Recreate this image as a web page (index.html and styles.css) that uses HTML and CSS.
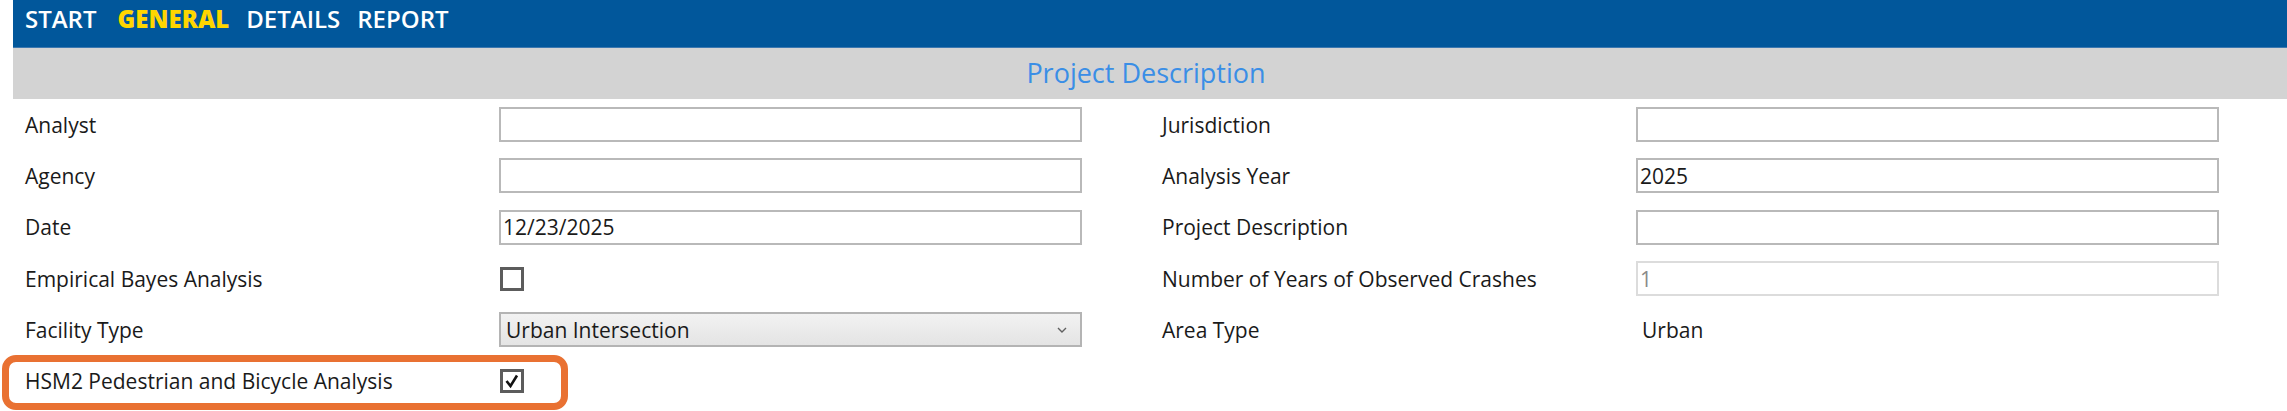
FILE: index.html
```html
<!DOCTYPE html>
<html>
<head>
<meta charset="utf-8">
<link rel="stylesheet" href="styles.css">
</head>
<body>
<div class="app">
  <nav class="tabs">
    <span class="tab first">START</span>
    <span class="tab active">GENERAL</span>
    <span class="tab">DETAILS</span>
    <span class="tab">REPORT</span>
  </nav>
  <div class="section-title">Project Description</div>
  <div class="form">
    <div class="col">
      <div class="row"><span class="label">Analyst</span><span class="textbox"></span></div>
      <div class="row"><span class="label">Agency</span><span class="textbox"></span></div>
      <div class="row"><span class="label">Date</span><span class="textbox">12/23/2025</span></div>
      <div class="row"><span class="label">Empirical Bayes Analysis</span><span class="checkbox"></span></div>
      <div class="row"><span class="label">Facility Type</span><span class="combo"><span class="combo-text">Urban Intersection</span><svg class="chev" width="10" height="6" viewBox="0 0 10 6"><path d="M1 1 L5 5 L9 1" fill="none" stroke="#606060" stroke-width="1.4"/></svg></span></div>
      <div class="row"><span class="label">HSM2 Pedestrian and Bicycle Analysis</span><span class="checkbox checked"><svg width="18" height="18" viewBox="0 0 18 18"><path d="M3.5 9 L7.5 14 L14 3.5" fill="none" stroke="#111" stroke-width="2.6"/></svg></span></div>
    </div>
    <div class="col">
      <div class="row"><span class="label">Jurisdiction</span><span class="textbox"></span></div>
      <div class="row"><span class="label">Analysis Year</span><span class="textbox">2025</span></div>
      <div class="row"><span class="label">Project Description</span><span class="textbox"></span></div>
      <div class="row"><span class="label">Number of Years of Observed Crashes</span><span class="textbox disabled">1</span></div>
      <div class="row"><span class="label">Area Type</span><span class="value">Urban</span></div>
    </div>
  </div>
  <div class="highlight"></div>
</div>
</body>
</html>
```
FILE: styles.css
```css
* { box-sizing: border-box; }
body {
  margin: 0;
  background: #fff;
  font-family: "Open Sans", "Noto Sans", sans-serif;
  color: #1a1a1a;
}
.app {
  position: relative;
  padding-left: 13px;
  height: 411px;
  overflow: hidden;
}
.tabs {
  height: 48px;
  background: #01579b;
  border-bottom: 1px solid #3c78b0;
  display: flex;
  align-items: flex-start;
  padding: 2px 0 0 12px;
  gap: 17px;
}
.tab {
  color: #fff;
  font-size: 24px;
  font-weight: 600;
}
.tab.first {
  margin-right: 4px;
}
.tab.active {
  color: #ffd600;
  font-weight: 800;
}
.section-title {
  height: 51px;
  background: #d3d3d3;
  color: #3a8ee6;
  font-size: 27px;
  display: flex;
  align-items: center;
  justify-content: center;
  padding: 0 8px 2px 0;
}
.form {
  display: flex;
  gap: 80px;
  padding-left: 12px;
}
.col {
  display: flex;
  flex-direction: column;
}
.row {
  display: grid;
  grid-template-columns: 474px 583px;
  align-items: center;
  height: 51.3px;
}
.label {
  font-size: 21px;
}
.textbox {
  height: 35px;
  border: 2px solid #b9b9b9;
  background: #fff;
  font-size: 21px;
  padding-left: 2px;
  display: flex;
  align-items: center;
}
.textbox.disabled {
  border-color: #dcdcdc;
  color: #8a8a8a;
}
.checkbox {
  width: 24px;
  height: 24px;
  margin-left: 1px;
  border: 3px solid #5c5c5c;
  background: #fff;
  display: flex;
  align-items: center;
  justify-content: center;
}
.combo {
  height: 35px;
  border: 2px solid #b4b4b4;
  background: linear-gradient(#f2f2f2, #e4e4e4);
  display: flex;
  align-items: center;
  justify-content: space-between;
  padding: 0 13px 0 5px;
  font-size: 21px;
}
.value {
  font-size: 21px;
  padding-left: 6px;
}
.highlight {
  position: absolute;
  left: 2px;
  top: 355px;
  width: 566px;
  height: 55px;
  border: 7px solid #e97132;
  border-radius: 14px;
}
```
